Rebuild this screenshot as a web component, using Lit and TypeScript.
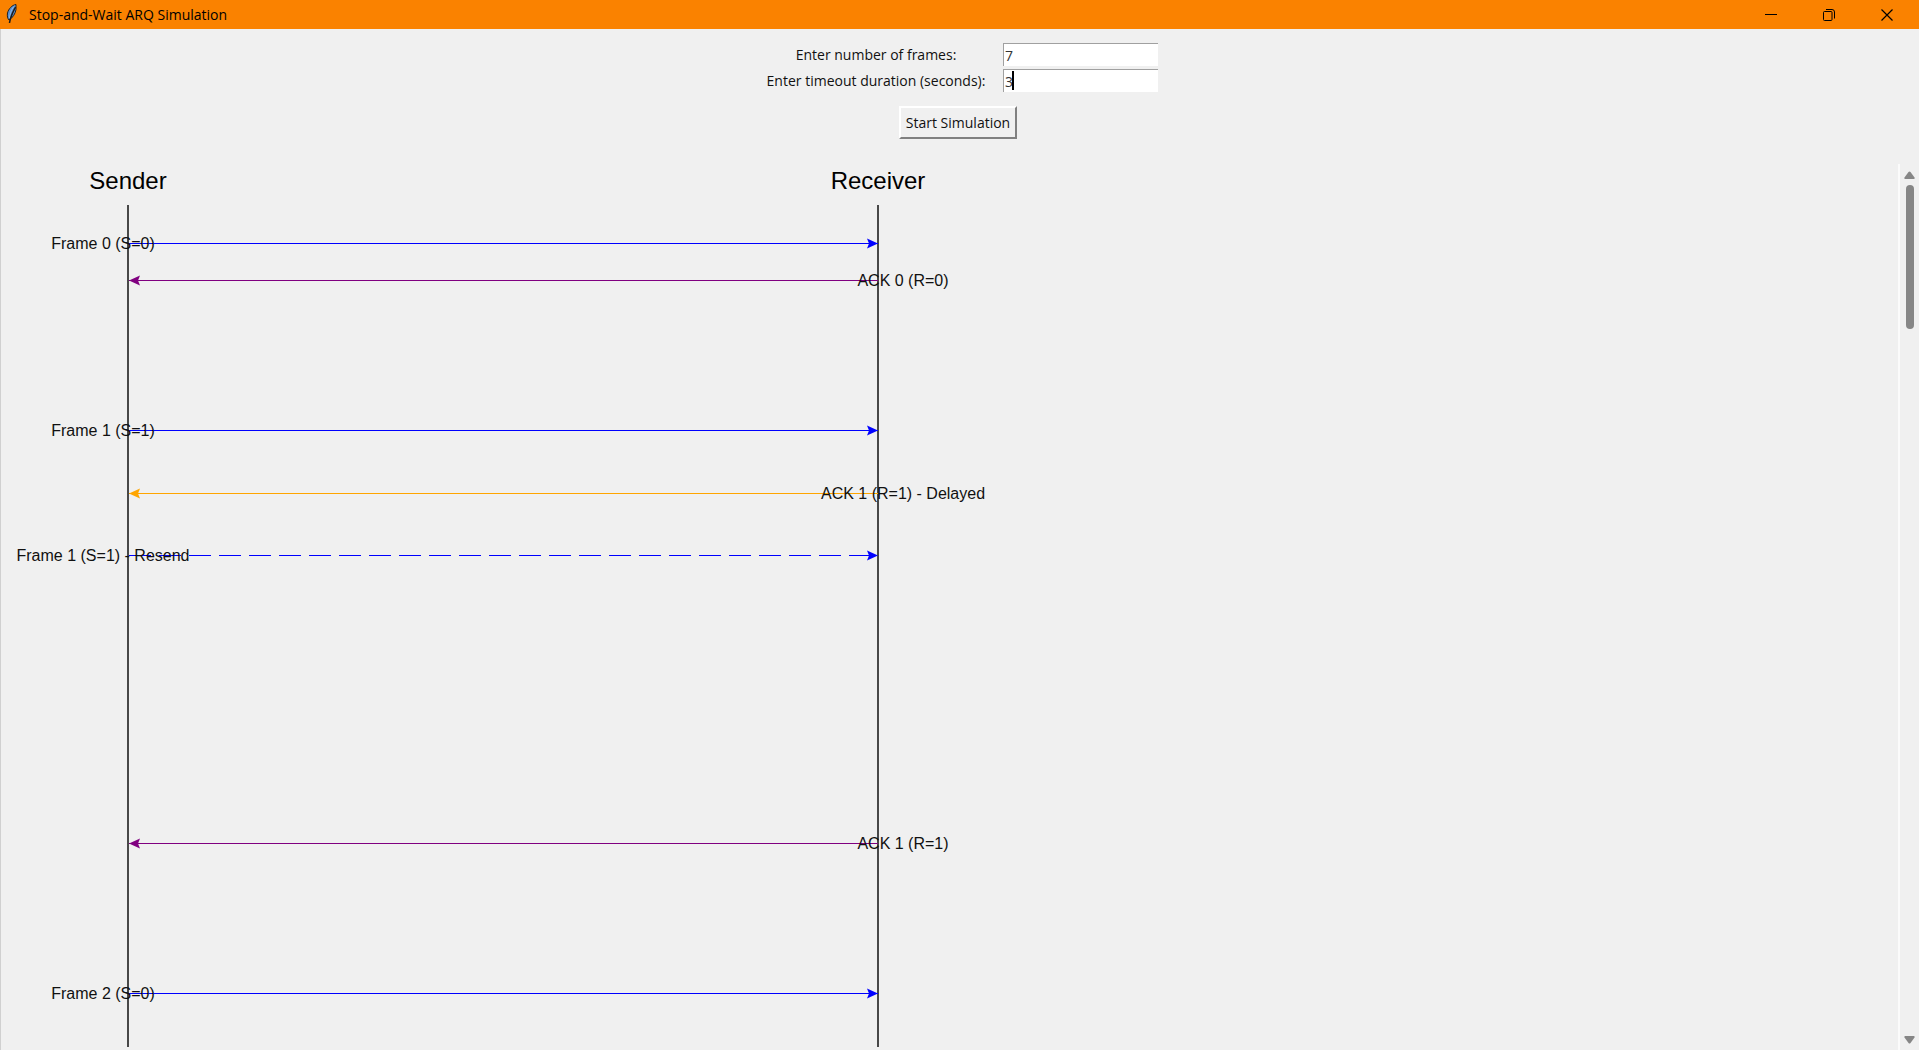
import { LitElement, html, css, svg } from "lit";
import { customElement, state } from "lit/decorators.js";

interface Message {
  y: number;
  label: string;
  from: "sender" | "receiver";
  color: string;
  dashed?: boolean;
}

const SENDER_X = 127;
const RECEIVER_X = 877;
const LABEL_OFFSET = 25;

const MESSAGES: Message[] = [
  { y: 79, label: "Frame 0 (S=0)", from: "sender", color: "#0000ff" },
  { y: 116, label: "ACK 0 (R=0)", from: "receiver", color: "#800080" },
  { y: 266, label: "Frame 1 (S=1)", from: "sender", color: "#0000ff" },
  { y: 329, label: "ACK 1 (R=1) - Delayed", from: "receiver", color: "#ffa500" },
  { y: 391, label: "Frame 1 (S=1) - Resend", from: "sender", color: "#0000ff", dashed: true },
  { y: 679, label: "ACK 1 (R=1)", from: "receiver", color: "#800080" },
  { y: 829, label: "Frame 2 (S=0)", from: "sender", color: "#0000ff" },
];

@customElement("title-bar")
export class TitleBar extends LitElement {
  static styles = css`
    :host {
      display: flex;
      align-items: center;
      height: 29px;
      padding-right: 3px;
      background: #fa8200;
      color: #000;
      font: 14px/20px "Open Sans", "Noto Sans", sans-serif;
    }
    .feather {
      width: 24px;
      height: 29px;
      flex: none;
    }
    .title {
      flex: 1;
      margin: 0;
      padding-left: 5px;
      font: inherit;
    }
    .control {
      width: 58px;
      height: 29px;
      padding: 0;
      border: 0;
      background: transparent;
      display: grid;
      place-items: center;
    }
    .glyph {
      display: block;
      fill: none;
      stroke: #000;
    }
  `;

  render() {
    return html`
      <svg class="feather" viewBox="0 0 24 29" aria-hidden="true">
        <path d="M16 4.500 C12 5 8.500 9 7.500 13 C7 16 7.500 18.500 9 20 C12.500 18 15.500 13.500 16 9.500 Z" fill="#5a8fd0" stroke="#222" stroke-width="1" />
        <path d="M14.500 6 C12 8 10 13 9.500 18" fill="none" stroke="#8fbbe8" stroke-width="1" />
        <path d="M15.500 7 C13 12 10.500 16 9.500 23" fill="none" stroke="#1c1c1c" stroke-width="1.500" />
      </svg>
      <h1 class="title">Stop-and-Wait ARQ Simulation</h1>
      <button class="control" aria-label="Minimize">
        <svg class="glyph" width="12" height="12"><path d="M0 5.500H12" /></svg>
      </button>
      <button class="control" aria-label="Restore">
        <svg class="glyph" width="12" height="12">
          <rect x="0.500" y="2.500" width="8.500" height="9" rx="1" />
          <path d="M3 0.500H9Q11.500 0.500 11.500 3V9.500" />
        </svg>
      </button>
      <button class="control" aria-label="Close">
        <svg class="glyph" width="12" height="12"><path d="M0.500 0.500L11.500 11.500M11.500 0.500L0.500 11.500" stroke-width="1.200" /></svg>
      </button>
    `;
  }
}

@customElement("settings-form")
export class SettingsForm extends LitElement {
  static styles = css`
    :host {
      display: block;
      padding: 14px 4px 25px 0;
      font: 14px/20px "Open Sans", "Noto Sans", sans-serif;
      color: #111;
    }
    .form {
      display: flex;
      flex-direction: column;
      align-items: center;
      gap: 14px;
      margin: 0;
    }
    .fields {
      display: grid;
      grid-template-columns: 236px 155px;
      column-gap: 9px;
      row-gap: 3px;
      align-items: center;
    }
    .label {
      text-align: center;
      white-space: nowrap;
    }
    .field {
      position: relative;
      display: flex;
    }
    .entry {
      box-sizing: border-box;
      width: 100%;
      height: 23px;
      margin: 0;
      padding: 0 1px;
      border: solid;
      border-width: 1px 0 0 1px;
      border-color: #a0a0a0;
      border-radius: 0;
      outline: 0;
      background: #fff;
      color: #333;
      font: inherit;
    }
    .caret {
      position: absolute;
      left: 9px;
      top: 2px;
      width: 2px;
      height: 19px;
      background: #000;
    }
    .start {
      box-sizing: border-box;
      height: 33px;
      padding: 0 5px;
      border: 2px solid;
      border-color: #fff #808080 #808080 #fff;
      background: #f0f0f0;
      color: #111;
      font: inherit;
      white-space: nowrap;
    }
  `;

  @state() private frames = "7";
  @state() private timeout = "3";

  render() {
    return html`
      <form class="form" @submit=${(e: Event) => e.preventDefault()}>
        <div class="fields">
          <label class="label" for="frames">Enter number of frames:</label>
          <div class="field">
            <input class="entry" id="frames" .value=${this.frames} />
          </div>
          <label class="label" for="timeout">Enter timeout duration (seconds):</label>
          <div class="field">
            <input class="entry" id="timeout" .value=${this.timeout} />
            <span class="caret"></span>
          </div>
        </div>
        <button class="start">Start Simulation</button>
      </form>
    `;
  }
}

@customElement("sequence-canvas")
export class SequenceCanvas extends LitElement {
  static styles = css`
    :host {
      display: block;
      min-width: 0;
    }
    .canvas {
      display: block;
      width: 100%;
      height: 100%;
      font-family: "Liberation Sans", Arial, sans-serif;
    }
    .heading {
      font-size: 24px;
      text-anchor: middle;
      fill: #000;
    }
    .label {
      font-size: 16px;
      text-anchor: middle;
      fill: #111;
    }
    .lifeline {
      fill: #484848;
    }
  `;

  private arrow(m: Message) {
    const right = m.from === "sender";
    const tip = right ? RECEIVER_X : SENDER_X + 1;
    const d = right ? -1 : 1;
    const y = m.y + 0.5;
    return svg`
      <line x1=${SENDER_X + 1} x2=${RECEIVER_X} y1=${y} y2=${y}
        stroke=${m.color} stroke-dasharray=${m.dashed ? "22 8" : "none"} />
      <path fill=${m.color}
        d="M${tip} ${y}L${tip + d * 11} ${y - 5}L${tip + d * 9} ${y}L${tip + d * 11} ${y + 5}Z" />
    `;
  }

  render() {
    return html`
      <svg class="canvas" role="img" aria-label="Message sequence">
        <rect class="lifeline" x=${SENDER_X - 1} y="41" width="2" height="842" />
        <rect class="lifeline" x=${RECEIVER_X - 1} y="41" width="2" height="842" />
        ${MESSAGES.map((m) => this.arrow(m))}
        <text class="heading" x=${SENDER_X} y="25">Sender</text>
        <text class="heading" x=${RECEIVER_X} y="25">Receiver</text>
        ${MESSAGES.map(
          (m) => svg`<text class="label"
            x=${m.from === "sender" ? SENDER_X - LABEL_OFFSET : RECEIVER_X + LABEL_OFFSET}
            y=${m.y + 6}>${m.label}</text>`
        )}
      </svg>
    `;
  }
}

@customElement("scroll-strip")
export class ScrollStrip extends LitElement {
  static styles = css`
    :host {
      box-sizing: border-box;
      display: flex;
      flex-direction: column;
      align-items: center;
      width: 21px;
      padding: 7px 0 6px;
      border-left: 2px solid #fbfbfb;
    }
    .arrow {
      flex: none;
      display: block;
      fill: #868686;
    }
    .track {
      flex: 1;
      padding: 6px 0;
    }
    .thumb {
      width: 8px;
      height: 17%;
      border-radius: 4px;
      background: #868686;
    }
  `;

  render() {
    return html`
      <svg class="arrow" width="11" height="8"><path d="M4.500 1Q5.500 0 6.500 1L10.500 6.500Q11 8 10 8H1Q0 8 0.500 6.500Z" /></svg>
      <div class="track"><div class="thumb"></div></div>
      <svg class="arrow" width="11" height="8"><path d="M4.500 7Q5.500 8 6.500 7L10.500 1.500Q11 0 10 0H1Q0 0 0.500 1.500Z" /></svg>
    `;
  }
}

@customElement("app-root")
export class AppRoot extends LitElement {
  static styles = css`
    :host {
      display: flex;
      flex-direction: column;
      height: 100vh;
      overflow: hidden;
      background: #f0f0f0;
    }
    .window {
      flex: 1;
      min-height: 0;
      display: flex;
      flex-direction: column;
      border-left: 1px solid #d0d0d0;
    }
    .view {
      flex: 1;
      min-height: 0;
      display: flex;
    }
    .diagram {
      flex: 1;
    }
  `;

  render() {
    return html`
      <title-bar></title-bar>
      <main class="window">
        <settings-form></settings-form>
        <div class="view">
          <sequence-canvas class="diagram"></sequence-canvas>
          <scroll-strip></scroll-strip>
        </div>
      </main>
    `;
  }
}
